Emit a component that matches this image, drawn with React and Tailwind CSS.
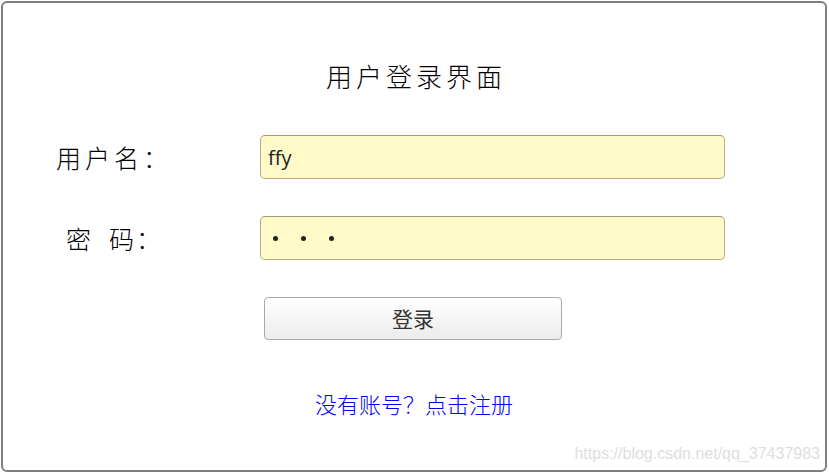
import React from "react";

const cjk = { fontFamily: '"Noto Sans CJK SC", "Noto Sans", sans-serif' };

export default function App() {
  return (
    <div className="w-[829px] h-[473px] bg-white p-[1px]">
      <div className="relative w-[826px] h-[471px] border-2 border-[#7f7f7f] rounded-[6px] bg-white pt-[58px]" style={cjk}>
        <h1 className="h-[30px] text-center text-[26px] leading-[30px] tracking-[4px] font-light text-black pl-[4px]">
          用户登录界面
        </h1>

        <div className="flex items-center mt-[44px] pl-[53px]">
          <label className="w-[204px] text-[25px] leading-[30px] tracking-[4px] font-light text-black">用户名：</label>
          <input
            readOnly
            value="ffy"
            className="w-[465px] h-[44px] px-[7px] rounded-[5px] border border-[#bba97f] border-t-[#a89674] bg-[#fffac8] text-[20px] text-[#222] outline-none"
            style={{ fontFamily: '"Open Sans", "Liberation Sans", sans-serif' }}
          />
        </div>

        <div className="flex items-center mt-[37px] pl-[53px]">
          <label className="w-[204px] pl-[10px] text-[25px] leading-[30px] font-light text-black flex items-center">
            <span>密</span>
            <span className="w-[18px]" />
            <span className="tracking-[2px]">码：</span>
          </label>
          <div className="w-[465px] h-[44px] pl-[12px] rounded-[5px] border border-[#bba97f] border-t-[#a89674] bg-[#fffac8] flex items-center gap-[23px]">
            <span className="w-[5px] h-[5px] rounded-full bg-[#222]" />
            <span className="w-[5px] h-[5px] rounded-full bg-[#222]" />
            <span className="w-[5px] h-[5px] rounded-full bg-[#222]" />
          </div>
        </div>

        <div className="mt-[37px] pl-[261px]">
          <button className="w-[298px] h-[43px] rounded-[4px] border border-[#a9a9a9] bg-gradient-to-b from-white to-[#ececec] text-[21px] text-[#333]">
            登录
          </button>
        </div>

        <div className="mt-[48px] text-center text-[22px] leading-[30px] font-light text-[#0000ff]">
          <a href="#" className="text-[#0000ff]">没有账号？点击注册</a>
        </div>

        <div
          className="absolute right-[5px] bottom-[7px] text-[16px] leading-[18px] text-[#dedede]"
          style={{ fontFamily: '"Liberation Sans", Arial, sans-serif' }}
        >
          https://blog.csdn.net/qq_37437983
        </div>
      </div>
    </div>
  );
}
